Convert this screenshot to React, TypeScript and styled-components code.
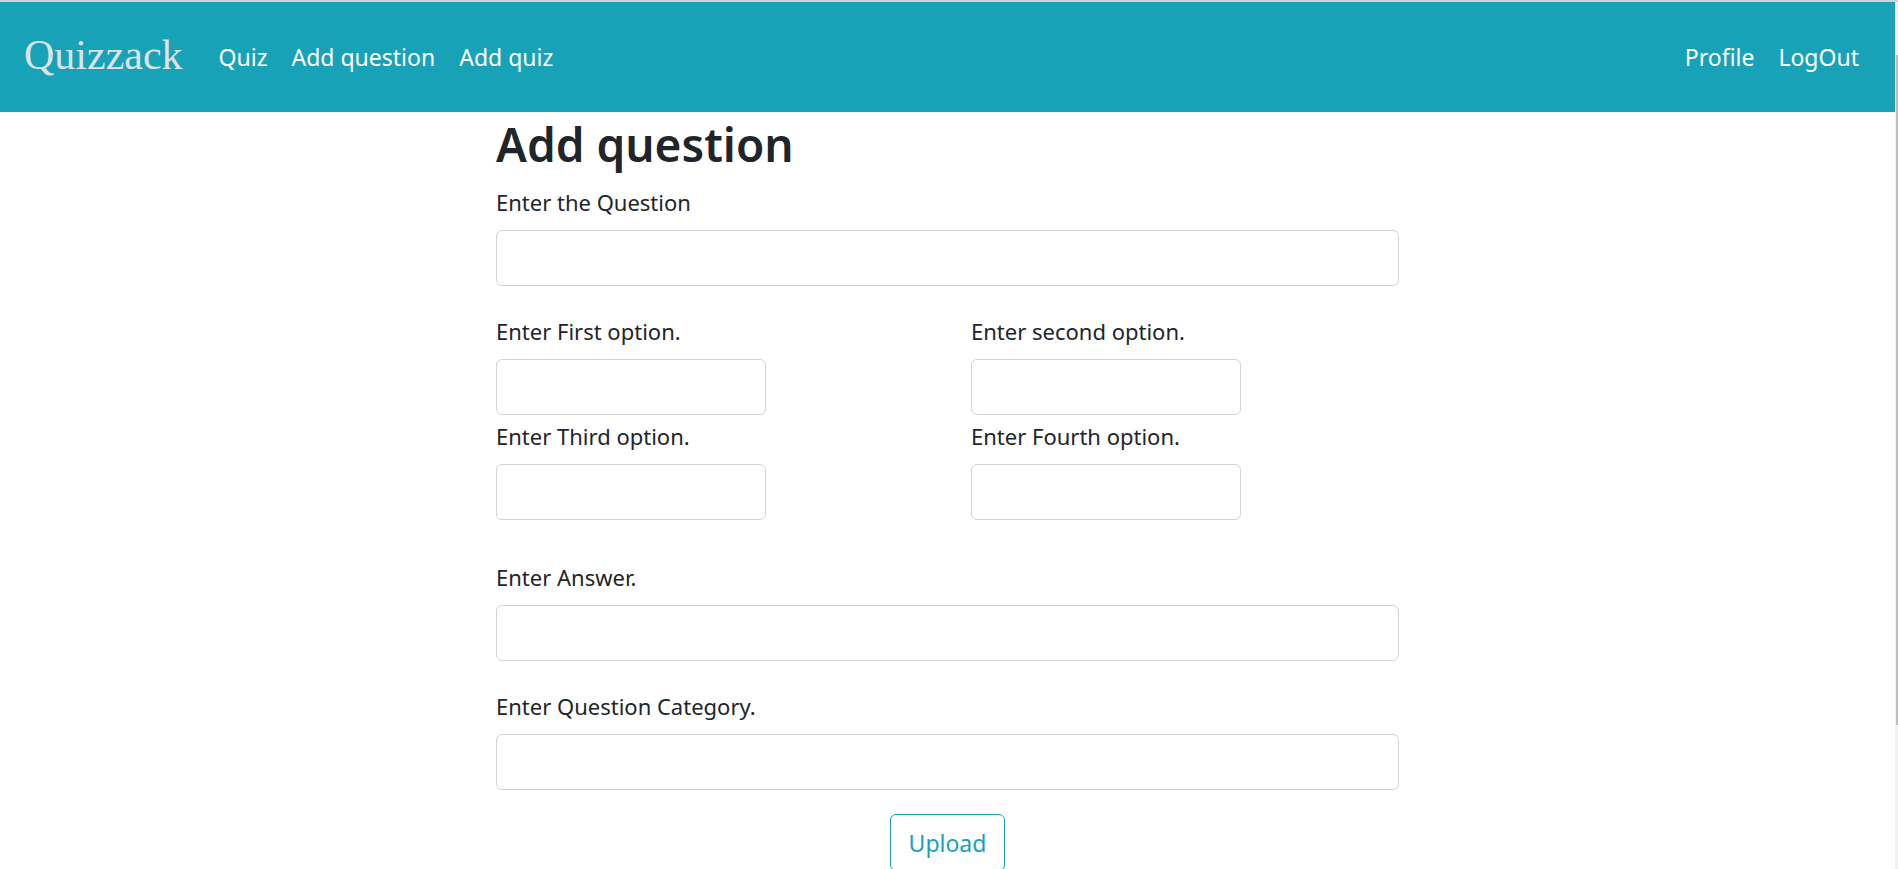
import styled, { createGlobalStyle } from 'styled-components';

const GlobalStyle = createGlobalStyle`
    html, body {
        margin: 0;
        padding: 0;
        background: #fff;
        color: #212529;
        font-family: "Noto Sans", "Open Sans", sans-serif;
        overflow: hidden;
    }
`;

const links = ['Quiz', 'Add question', 'Add quiz'];
const userLinks = ['Profile', 'LogOut'];

function App() {
    return (
        <Shell>
            <GlobalStyle />
            <Main>
                <Navbar>
                    <Brand>Quizzack</Brand>
                    <NavList>
                        {links.map(l => <NavLink key={l}>{l}</NavLink>)}
                    </NavList>
                    <NavList $right>
                        {userLinks.map(l => <NavLink key={l}>{l}</NavLink>)}
                    </NavList>
                </Navbar>
                <Form>
                    <Title>Add question</Title>
                    <Field $gap={27}>
                        <Label>Enter the Question</Label>
                        <Input />
                    </Field>
                    <OptionsGrid>
                        <Field>
                            <Label>Enter First option.</Label>
                            <Input $small />
                        </Field>
                        <Field>
                            <Label>Enter second option.</Label>
                            <Input $small />
                        </Field>
                        <Field>
                            <Label>Enter Third option.</Label>
                            <Input $small />
                        </Field>
                        <Field>
                            <Label>Enter Fourth option.</Label>
                            <Input $small />
                        </Field>
                    </OptionsGrid>
                    <Field $gap={27}>
                        <Label>Enter Answer.</Label>
                        <Input />
                    </Field>
                    <Field $gap={24}>
                        <Label>Enter Question Category.</Label>
                        <Input />
                    </Field>
                    <ButtonRow>
                        <UploadButton type="button">Upload</UploadButton>
                    </ButtonRow>
                </Form>
            </Main>
            <ScrollTrack>
                <ScrollThumb />
            </ScrollTrack>
        </Shell>
    );
}

export default App;

const Shell = styled.div`
    display: flex;
    height: 100vh;
    box-sizing: border-box;
    border-top: 2px solid #d4d4d4;
    overflow: hidden;
`;

const Main = styled.div`
    flex: 1;
    min-width: 0;
`;

const ScrollTrack = styled.div`
    display: flex;
    justify-content: flex-end;
    width: 3px;
    padding-top: 53px;
    background: #f1f1f1;
`;

const ScrollThumb = styled.div`
    width: 2px;
    height: 670px;
    background: #bdbdbd;
`;

const Navbar = styled.nav`
    display: flex;
    align-items: center;
    height: 110px;
    padding: 0 24px;
    background: #17a2b8;
`;

const Brand = styled.a`
    font-family: "Liberation Serif", "Times New Roman", serif;
    font-size: 42px;
    color: #dee2e6;
    margin-right: 24px;
    margin-top: -4px;
`;

const NavList = styled.div<{ $right?: boolean }>`
    display: flex;
    margin-left: ${props => props.$right ? 'auto' : '0'};
`;

const NavLink = styled.a`
    padding: 0 12px;
    font-size: 23px;
    color: #fff;
`;

const Form = styled.form`
    width: 903px;
    margin: 0 auto;
`;

const Title = styled.h1`
    margin: 2px 0 10px;
    font-size: 46px;
    line-height: 60px;
    font-weight: 600;
    color: #212529;
`;

const Field = styled.div<{ $gap?: number }>`
    display: flex;
    flex-direction: column;
    align-items: flex-start;
    margin-bottom: ${props => props.$gap ?? 0}px;
`;

const Label = styled.label`
    font-size: 22px;
    line-height: 36px;
    margin-bottom: 10px;
`;

const Input = styled.input<{ $small?: boolean }>`
    box-sizing: border-box;
    width: ${props => props.$small ? '270px' : '100%'};
    height: 56px;
    border: 1px solid #ced4da;
    border-radius: 6px;
    padding: 0 18px;
    font-size: 22px;
    font-family: inherit;
    outline: none;
`;

const OptionsGrid = styled.div`
    display: grid;
    grid-template-columns: 475px 1fr;
    row-gap: 3px;
    margin-bottom: 39px;
`;

const ButtonRow = styled.div`
    display: flex;
    justify-content: center;
`;

const UploadButton = styled.button`
    height: 57px;
    padding: 0 18px;
    font-family: inherit;
    font-size: 23px;
    color: #17a2b8;
    background: #fff;
    border: 1px solid #17a2b8;
    border-radius: 6px;
`;
